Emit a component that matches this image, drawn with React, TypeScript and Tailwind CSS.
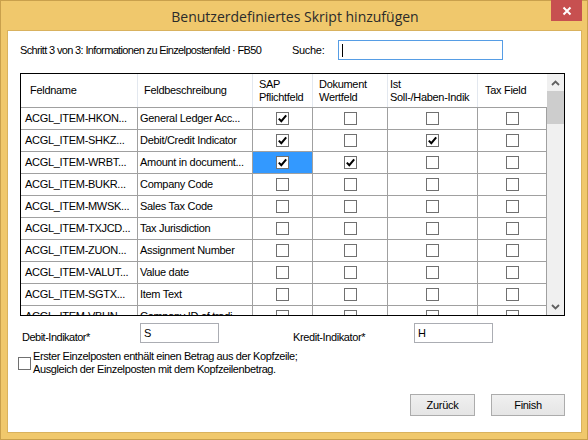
import React from "react";

type Row = {
  name: string;
  desc: string;
  c: [boolean, boolean, boolean, boolean];
  sel?: boolean;
};

const rows: Row[] = [
  { name: "ACGL_ITEM-HKON...", desc: "General Ledger Acc...", c: [true, false, false, false] },
  { name: "ACGL_ITEM-SHKZ...", desc: "Debit/Credit Indicator", c: [true, false, true, false] },
  { name: "ACGL_ITEM-WRBT...", desc: "Amount in document...", c: [true, true, false, false], sel: true },
  { name: "ACGL_ITEM-BUKR...", desc: "Company Code", c: [false, false, false, false] },
  { name: "ACGL_ITEM-MWSK...", desc: "Sales Tax Code", c: [false, false, false, false] },
  { name: "ACGL_ITEM-TXJCD...", desc: "Tax Jurisdiction", c: [false, false, false, false] },
  { name: "ACGL_ITEM-ZUON...", desc: "Assignment Number", c: [false, false, false, false] },
  { name: "ACGL_ITEM-VALUT...", desc: "Value date", c: [false, false, false, false] },
  { name: "ACGL_ITEM-SGTX...", desc: "Item Text", c: [false, false, false, false] },
  { name: "ACGL_ITEM-VBUN...", desc: "Company ID of tradi...", c: [false, false, false, false] },
];

function CB({ checked }: { checked: boolean }) {
  return (
    <div className="w-[13px] h-[13px] border border-[#707070] bg-white flex items-center justify-center">
      {checked && (
        <svg width="11" height="11" viewBox="0 0 11 11">
          <path d="M1.8 5.6 L4.3 8.2 L9.2 2.4" stroke="#000" strokeWidth="2" fill="none" />
        </svg>
      )}
    </div>
  );
}

const checkCols = ["w-[60px]", "w-[75px]", "w-[90px]", "w-[69px]"];

export default function App() {
  return (
    <div
      className="w-[588px] h-[440px] bg-[#f0c86c] border border-[#c9a04c] flex flex-col text-[11px] text-black tracking-[-0.3px]"
      style={{ fontFamily: '"Liberation Sans", Arial, sans-serif' }}
    >
      {/* Title bar */}
      <div className="relative h-[29px] flex items-center justify-center">
        <span
          className="text-[14px] tracking-[0px] text-[#2b2b2b] mt-[1px] ml-[2px]"
          style={{ fontFamily: '"Open Sans", "Noto Sans", sans-serif' }}
        >
          Benutzerdefiniertes Skript hinzufügen
        </span>
        <div className="absolute top-[-1px] right-[5px] w-[31px] h-[21px] bg-[#c75050] flex items-center justify-center">
          <svg width="10" height="10" viewBox="0 0 10 10">
            <path d="M1.5 1.5 L8.5 8.5 M8.5 1.5 L1.5 8.5" stroke="#fff" strokeWidth="2" />
          </svg>
        </div>
      </div>

      {/* Content */}
      <div className="ml-[6px] mr-[5px] mb-[6px] flex-1 bg-white border border-[#d9b25e] flex flex-col">
        {/* Top line */}
        <div className="flex items-center mt-[9px] h-[20px]">
          <span className="ml-[12px] w-[272px] whitespace-nowrap tracking-[-0.65px]">
            Schritt 3 von 3: Informationen zu Einzelpostenfeld · FB50
          </span>
          <span className="w-[46px]">Suche:</span>
          <div className="w-[165px] h-[20px] border border-[#569de5] flex items-center pl-[3px]">
            <div className="w-[1px] h-[13px] bg-black" />
          </div>
        </div>

        {/* Grid */}
        <div className="mt-[13px] ml-[12px] w-[545px] h-[243px] border border-black flex overflow-hidden">
          <div className="w-[526px] flex flex-col overflow-hidden">
            {/* Header */}
            <div className="h-[34px] flex border-b border-[#a0a0a0] shrink-0 leading-[13px]">
              <div className="w-[117px] border-r border-[#e3e8ef] flex items-center pl-[9px]">Feldname</div>
              <div className="w-[115px] border-r border-[#e3e8ef] flex items-center pl-[6px]">Feldbeschreibung</div>
              <div className="w-[60px] border-r border-[#e3e8ef] flex items-center pl-[6px]">
                <span>
                  SAP
                  <br />
                  Pflichtfeld
                </span>
              </div>
              <div className="w-[75px] border-r border-[#e3e8ef] flex items-center pl-[6px]">
                <span>
                  Dokument
                  <br />
                  Wertfeld
                </span>
              </div>
              <div className="w-[90px] border-r border-[#e3e8ef] flex items-center pl-[2px] overflow-hidden">
                <span className="whitespace-nowrap">
                  Ist
                  <br />
                  Soll-/Haben-Indik
                </span>
              </div>
              <div className="w-[69px] flex items-center pl-[7px]">Tax Field</div>
            </div>
            {/* Rows */}
            {rows.map((r, i) => (
              <div key={i} className="h-[22px] shrink-0 flex border-b border-[#a0a0a0]">
                <div className="w-[117px] border-r border-[#a0a0a0] flex items-center pl-[4px] whitespace-nowrap overflow-hidden">
                  {r.name}
                </div>
                <div className="w-[115px] border-r border-[#a0a0a0] flex items-center pl-[2px] whitespace-nowrap overflow-hidden">
                  {r.desc}
                </div>
                {r.c.map((v, j) => (
                  <div
                    key={j}
                    className={`${checkCols[j]} border-r border-[#a0a0a0] flex items-center justify-center ${
                      r.sel && j === 0 ? "bg-[#3399ff]" : ""
                    }`}
                  >
                    <CB checked={v} />
                  </div>
                ))}
              </div>
            ))}
          </div>
          {/* Scrollbar */}
          <div className="w-[17px] bg-[#f0f0f0] flex flex-col">
            <div className="h-[17px] flex items-center justify-center">
              <svg width="9" height="6" viewBox="0 0 9 6">
                <path d="M1 5 L4.5 1.5 L8 5" stroke="#606060" strokeWidth="1.8" fill="none" />
              </svg>
            </div>
            <div className="h-[33px] bg-[#cdcdcd]" />
            <div className="flex-1" />
            <div className="h-[17px] flex items-center justify-center">
              <svg width="9" height="6" viewBox="0 0 9 6">
                <path d="M1 1 L4.5 4.5 L8 1" stroke="#606060" strokeWidth="1.8" fill="none" />
              </svg>
            </div>
          </div>
        </div>

        {/* Indicator row */}
        <div className="flex items-start mt-[7px] h-[20px]">
          <span className="ml-[14px] w-[118px] pt-[8px] leading-[13px] tracking-[-0.5px]">Debit-Indikator*</span>
          <div className="w-[79px] h-[20px] border border-[#abadb3] pl-[3px] leading-[18px]">S</div>
          <span className="ml-[74px] w-[121px] pt-[8px] leading-[13px] tracking-[-0.4px]">Kredit-Indikator*</span>
          <div className="w-[79px] h-[20px] border border-[#abadb3] pl-[3px] leading-[18px]">H</div>
        </div>

        {/* Checkbox row */}
        <div className="flex items-center mt-[7px] ml-[10px]">
          <div className="w-[13px] h-[13px] border border-[#707070] bg-white" />
          <div className="ml-[2px] leading-[13px] tracking-[-0.4px]">
            Erster Einzelposten enthält einen Betrag aus der Kopfzeile;
            <br />
            Ausgleich der Einzelposten mit dem Kopfzeilenbetrag.
          </div>
        </div>

        {/* Buttons */}
        <div className="flex justify-end gap-[16px] pr-[16px] mt-[18px]">
          <button className="w-[65px] h-[22px] border border-[#acacac] bg-gradient-to-b from-[#f0f0f0] to-[#e5e5e5] text-[11px]">
            Zurück
          </button>
          <button className="w-[74px] h-[22px] border border-[#acacac] bg-gradient-to-b from-[#f0f0f0] to-[#e5e5e5] text-[11px]">
            Finish
          </button>
        </div>
      </div>
    </div>
  );
}
